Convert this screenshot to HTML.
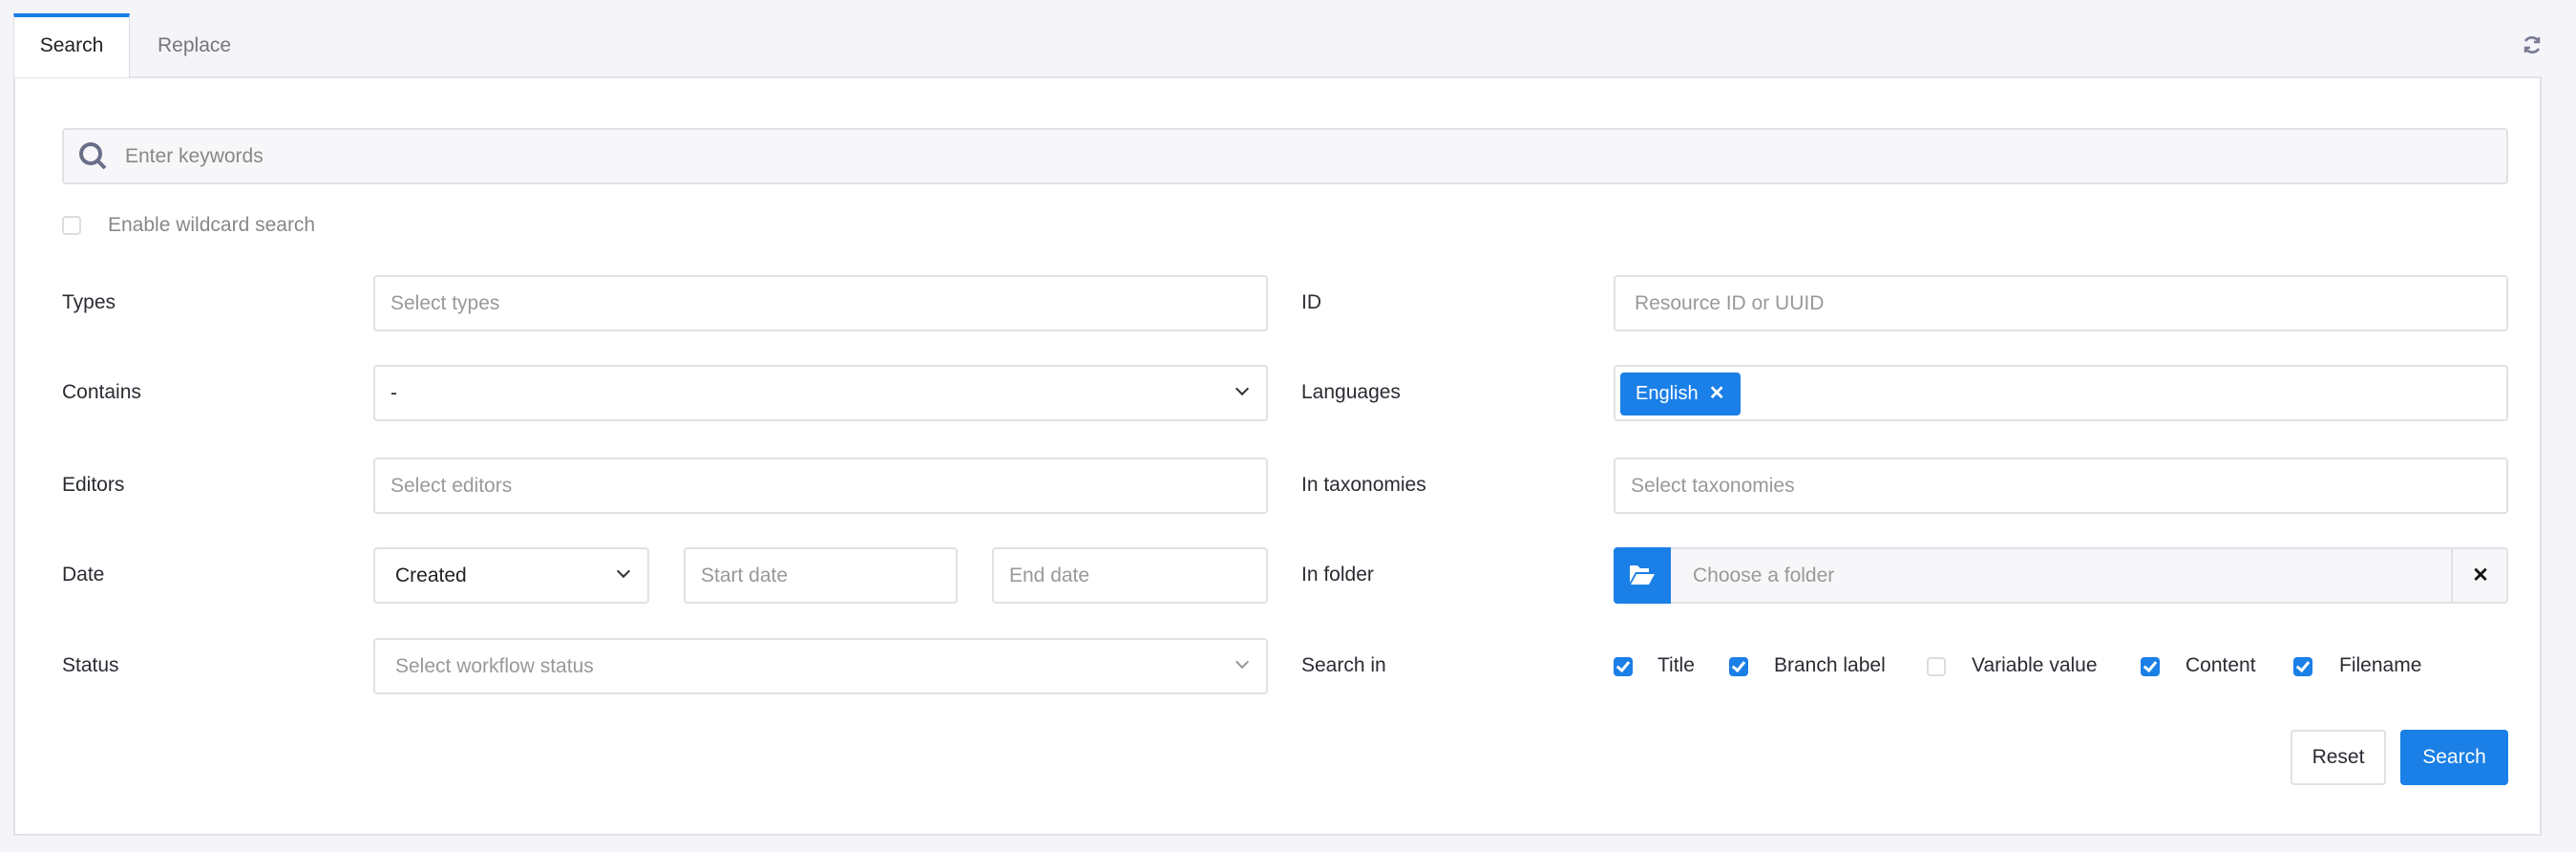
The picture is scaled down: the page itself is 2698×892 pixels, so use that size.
<!DOCTYPE html>
<html><head><meta charset="utf-8"><style>
*{box-sizing:border-box;margin:0;padding:0}
body{width:2698px;height:892px;background:#f4f4f9;font-family:"Liberation Sans",sans-serif;font-size:21px;color:#2b2b33;position:relative;overflow:hidden}
.abs{position:absolute}
.tab{left:14px;top:14px;width:122px;height:67px;background:#fff;border:1px solid #dcdce4;border-bottom:none;border-top:4px solid #1a7fe6;z-index:2;text-align:center;line-height:60px;color:#222}
.tab2{left:165px;top:18px;line-height:60px;color:#777}
.panel{left:14px;top:80px;width:2648px;height:795px;background:#fff;border:2px solid #e2e2e8}
.inp{height:59px;border:2px solid #e0e0e6;border-radius:4px;background:#fff;color:#999;line-height:55px;padding-left:16px}
.lbl{color:#2b2b33;line-height:30px}
.cb{width:20px;height:20px;border-radius:4px;background:#1a7fe6}
.cb::after{content:"";position:absolute;left:6px;top:2px;width:5px;height:10px;border:solid #fff;border-width:0 3px 3px 0;transform:rotate(40deg)}
.cbo{width:20px;height:20px;border-radius:4px;border:2px solid #ddd;background:#fff}
.chev{position:absolute;right:20px;top:18px;width:10px;height:10px;border:solid #333;border-width:0 2.5px 2.5px 0;transform:rotate(45deg)}
</style></head><body>
<div class="abs tab">Search</div>
<div class="abs tab2">Replace</div>
<svg class="abs" style="left:2641px;top:36px" width="22" height="22" viewBox="0 0 22 22" fill="none" stroke="#777a90" stroke-width="2.6"><path d="M18 8A8 8 0 0 0 4 7"/><path d="M4 14a8 8 0 0 0 14 1"/><path d="M18 3v5h-5" stroke-width="2.4"/><path d="M4 19v-5h5" stroke-width="2.4"/></svg>
<div class="abs panel"></div>
<div class="abs inp" style="left:65px;top:134px;width:2562px;background:#f7f7f9;padding-left:64px;color:#888">Enter keywords</div>
<svg class="abs" style="left:82px;top:148px" width="32" height="32" viewBox="0 0 32 32" fill="none" stroke="#6a6e88" stroke-width="4"><circle cx="13" cy="13" r="10"/><path d="M20 20l8 8"/></svg>
<div class="abs cbo" style="left:65px;top:226px"></div>
<div class="abs lbl" style="left:113px;top:221px;color:#888">Enable wildcard search</div>

<div class="abs lbl" style="left:65px;top:302px">Types</div>
<div class="abs inp" style="left:391px;top:288px;width:937px">Select types</div>
<div class="abs lbl" style="left:65px;top:396px">Contains</div>
<div class="abs inp" style="left:391px;top:382px;width:937px;color:#222">-<span class="chev"></span></div>
<div class="abs lbl" style="left:65px;top:493px">Editors</div>
<div class="abs inp" style="left:391px;top:479px;width:937px">Select editors</div>
<div class="abs lbl" style="left:65px;top:587px">Date</div>
<div class="abs inp" style="left:391px;top:573px;width:289px;color:#222;padding-left:21px">Created<span class="chev"></span></div>
<div class="abs inp" style="left:716px;top:573px;width:287px">Start date</div>
<div class="abs inp" style="left:1039px;top:573px;width:289px">End date</div>
<div class="abs lbl" style="left:65px;top:682px">Status</div>
<div class="abs inp" style="left:391px;top:668px;width:937px;padding-left:21px">Select workflow status<span class="chev" style="border-color:#999"></span></div>

<div class="abs lbl" style="left:1363px;top:302px">ID</div>
<div class="abs inp" style="left:1690px;top:288px;width:937px;padding-left:20px">Resource ID or UUID</div>
<div class="abs lbl" style="left:1363px;top:396px">Languages</div>
<div class="abs inp" style="left:1690px;top:382px;width:937px"></div>
<div class="abs" style="left:1697px;top:390px;width:126px;height:45px;background:#1a7fe6;border-radius:4px;color:#fff;line-height:45px;padding-left:16px;font-size:20px">English&nbsp; <b>✕</b></div>
<div class="abs lbl" style="left:1363px;top:493px">In taxonomies</div>
<div class="abs inp" style="left:1690px;top:479px;width:937px">Select taxonomies</div>
<div class="abs lbl" style="left:1363px;top:587px">In folder</div>
<div class="abs inp" style="left:1690px;top:573px;width:937px;background:#f7f7f9;padding-left:81px">Choose a folder</div>
<div class="abs" style="left:1690px;top:573px;width:60px;height:59px;background:#1a7fe6;border-radius:4px 0 0 4px"></div>
<svg class="abs" style="left:1706px;top:590px" width="28" height="24" viewBox="0 0 28 24" fill="#fff"><path d="M1 2h8l3 3h9v4H7L1 20z"/><path d="M8 11h19l-6 11H2z"/></svg>
<div class="abs" style="left:2567px;top:573px;width:60px;height:59px;border-left:2px solid #e0e0e6;text-align:center;line-height:59px;font-weight:bold;color:#111">✕</div>
<div class="abs lbl" style="left:1363px;top:682px">Search in</div>
<div class="abs cb" style="left:1690px;top:688px"></div><div class="abs lbl" style="left:1736px;top:682px">Title</div>
<div class="abs cb" style="left:1811px;top:688px"></div><div class="abs lbl" style="left:1858px;top:682px">Branch label</div>
<div class="abs cbo" style="left:2018px;top:688px"></div><div class="abs lbl" style="left:2065px;top:682px">Variable value</div>
<div class="abs cb" style="left:2242px;top:688px"></div><div class="abs lbl" style="left:2289px;top:682px">Content</div>
<div class="abs cb" style="left:2402px;top:688px"></div><div class="abs lbl" style="left:2450px;top:682px">Filename</div>

<div class="abs" style="left:2399px;top:764px;width:100px;height:58px;border:2px solid #e0e0e6;border-radius:4px;text-align:center;line-height:54px">Reset</div>
<div class="abs" style="left:2514px;top:764px;width:113px;height:58px;background:#1a7fe6;border-radius:4px;text-align:center;line-height:58px;color:#fff">Search</div>
</body></html>
